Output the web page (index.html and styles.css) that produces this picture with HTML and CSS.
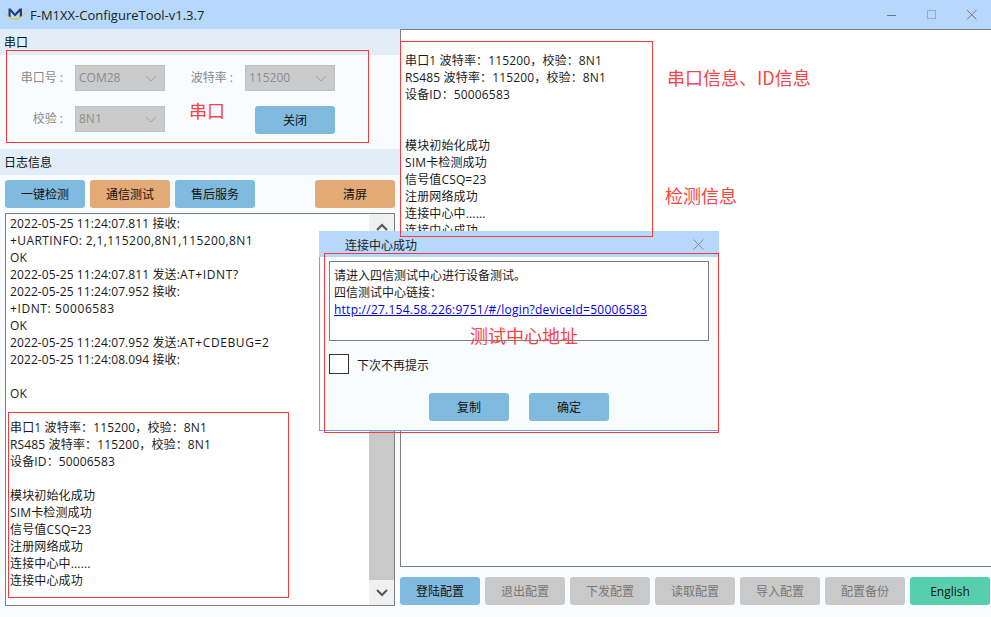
FILE: index.html
```html
<!DOCTYPE html>
<html lang="zh">
<head>
<meta charset="utf-8">
<title>F-M1XX-ConfigureTool-v1.3.7</title>
<link rel="stylesheet" href="styles.css">
</head>
<body>
<div class="window">
  <header class="titlebar">
    <svg class="logo" viewBox="0 0 26 18" width="26" height="18" aria-hidden="true">
      <path d="M6.500 12V3.500H8.500L13 8.500 17.500 3.500H20V12H17.800V6.800L13 11.500 8.600 6.800V12z" fill="#1f3f80"/>
      <path d="M.5 5C5 10.500 9 13.600 13 13.600S21 10.500 25.500 5C22 11 17 15 13 15S4 11 .5 5z" fill="#f0c21c"/>
    </svg>
    <span class="app-title">F-M1XX-ConfigureTool-v1.3.7</span>
    <div class="win-controls">
      <svg width="12" height="12" viewBox="0 0 12 12"><path d="M1 6.500h9" stroke="#777" fill="none"/></svg>
      <svg width="12" height="12" viewBox="0 0 12 12"><rect x="1.500" y="1.500" width="8" height="8" stroke="#a9a9a9" fill="none"/></svg>
      <svg width="12" height="12" viewBox="0 0 12 12"><path d="M1 1l9.500 9.500M10.500 1L1 10.500" stroke="#777" fill="none"/></svg>
    </div>
  </header>
  <main class="content">
    <section class="left">
      <h2 class="section-head serial-head">串口</h2>
      <div class="serial-form">
        <label class="field-label">串口号 :</label>
        <div class="select"><span>COM28</span><svg class="chev" width="12" height="7" viewBox="0 0 12 7"><path d="M1 1l5 5 5-5" stroke="#a0a0a0" fill="none"/></svg></div>
        <label class="field-label">波特率 :</label>
        <div class="select"><span>115200</span><svg class="chev" width="12" height="7" viewBox="0 0 12 7"><path d="M1 1l5 5 5-5" stroke="#a0a0a0" fill="none"/></svg></div>
        <label class="field-label">校验 :</label>
        <div class="select"><span>8N1</span><svg class="chev" width="12" height="7" viewBox="0 0 12 7"><path d="M1 1l5 5 5-5" stroke="#a0a0a0" fill="none"/></svg></div>
        <span></span>
        <button class="btn btn-blue close-btn">关闭</button>
      </div>
      <h2 class="section-head log-head">日志信息</h2>
      <div class="log-tools">
        <button class="btn btn-blue">一键检测</button>
        <button class="btn btn-orange">通信测试</button>
        <button class="btn btn-blue">售后服务</button>
        <button class="btn btn-orange clear-btn">清屏</button>
      </div>
      <div class="log-box">
        <div class="log-text">2022-05-25 11:24:07.811 接收:
<span class="loose">+UARTINFO: 2,1,115200,8N1,115200,8N1</span>
OK
2022-05-25 11:24:07.811 发送:<span class="loose-more">AT+IDNT?</span>
2022-05-25 11:24:07.952 接收:
<span class="loose-more">+IDNT: 50006583</span>
OK
2022-05-25 11:24:07.952 发送:<span class="loose-more">AT+CDEBUG=2</span>
2022-05-25 11:24:08.094 接收:

OK

<span class="summary">串口1 波特率&#xFF1A;115200&#xFF0C;校验&#xFF1A;8N1
RS485 波特率&#xFF1A;115200&#xFF0C;校验&#xFF1A;8N1
设备ID&#xFF1A;50006583

模块初始化成功
SIM卡检测成功
信号值CSQ=23
注册网络成功
连接中心中......
连接中心成功</span></div>
        <div class="scrollbar">
          <div class="sb-btn"><svg width="12" height="8" viewBox="0 0 12 8"><path d="M1 7l5-5 5 5" stroke="#555" stroke-width="2" fill="none"/></svg></div>
          <div class="sb-thumb"></div>
          <div class="sb-btn"><svg width="12" height="8" viewBox="0 0 12 8"><path d="M1 1l5 5 5-5" stroke="#555" stroke-width="2" fill="none"/></svg></div>
        </div>
      </div>
    </section>
    <section class="right">
      <div class="info-box">串口1 波特率&#xFF1A;115200&#xFF0C;校验&#xFF1A;8N1
RS485 波特率&#xFF1A;115200&#xFF0C;校验&#xFF1A;8N1
设备ID&#xFF1A;50006583


模块初始化成功
SIM卡检测成功
信号值CSQ=23
注册网络成功
连接中心中......
连接中心成功</div>
      <div class="config-bar">
        <button class="btn btn-blue">登陆配置</button>
        <button class="btn btn-gray">退出配置</button>
        <button class="btn btn-gray">下发配置</button>
        <button class="btn btn-gray">读取配置</button>
        <button class="btn btn-gray">导入配置</button>
        <button class="btn btn-gray">配置备份</button>
        <button class="btn btn-green">English</button>
      </div>
    </section>
  </main>

  <div class="dialog">
    <div class="dialog-head">
      <span>连接中心成功</span>
      <svg width="11" height="11" viewBox="0 0 11 11"><path d="M.5.500l10 10M10.500.500l-10 10" stroke="#8a8a8a" fill="none"/></svg>
    </div>
    <div class="dialog-body">
      <div class="dialog-msg">请进入四信测试中心进行设备测试。
四信测试中心链接&#xFF1A;
<a href="#">http://27.154.58.226:9751/#/login?deviceId=50006583</a></div>
      <div class="check-row"><span class="checkbox"></span><span class="check-label">下次不再提示</span></div>
      <div class="dialog-actions">
        <button class="btn btn-blue">复制</button>
        <button class="btn btn-blue">确定</button>
      </div>
    </div>
  </div>

  <div class="mark mark-serial"></div>
  <div class="mark mark-log"></div>
  <div class="mark mark-info"></div>
  <div class="mark mark-dialog"></div>
  <span class="note note-serial">串口</span>
  <span class="note note-id">串口信息、ID信息</span>
  <span class="note note-detect">检测信息</span>
  <span class="note note-center">测试中心地址</span>
</div>
</body>
</html>
```
FILE: styles.css
```css
* { box-sizing: border-box; }
html, body { margin: 0; height: 100%; overflow: hidden; }
body {
  font-family: "Open Sans", "Noto Sans CJK SC", sans-serif;
  font-size: 12px;
  color: #1a1a1a;
}
.window {
  position: relative;
  width: 991px;
  height: 617px;
  background: #f8fcff;
  display: flex;
  flex-direction: column;
}
.titlebar {
  height: 29px;
  background: #b5d8fc;
  display: flex;
  align-items: center;
  padding-left: 2px;
  flex: none;
}
.logo { flex: none; margin-top: -2px; }
.app-title { margin-left: 2px; font-size: 13px; color: #222; }
.win-controls {
  margin-left: auto;
  display: flex;
  gap: 28px;
  padding-right: 13px;
}
.content {
  flex: 1;
  display: grid;
  grid-template-columns: 400px 591px;
  min-height: 0;
}
.left { display: flex; flex-direction: column; min-height: 0; }
.section-head {
  margin: 0;
  font-size: 12px;
  font-weight: 400;
  background: #e1edf7;
  padding-left: 4px;
  color: #111;
}
.serial-head { height: 26px; line-height: 27px; }
.log-head { height: 26px; line-height: 27px; }
.serial-form {
  height: 94px;
  display: grid;
  grid-template-columns: 63px 90px 56px 90px;
  grid-auto-rows: 26px;
  row-gap: 15px;
  column-gap: 12px;
  padding: 10px 0 0 0;
  align-content: start;
}
.field-label {
  color: #8a8a8a;
  text-align: right;
  line-height: 26px;
}
.select {
  background: #cbcbcb;
  border: 1px solid #c0c0c0;
  color: #8c8c8c;
  padding-left: 3px;
  line-height: 24px;
  display: flex;
  justify-content: space-between;
  align-items: center;
  padding-right: 7px;
}
.chev { flex: none; }
.btn {
  font: inherit;
  width: 80px;
  height: 28px;
  border: 0;
  border-radius: 3px;
  padding: 0;
  color: #111;
  flex: none;
}
.btn-blue { background: #80bbdf; }
.btn-orange { background: #e3a977; }
.btn-gray { background: #c9c9c9; color: #777; }
.btn-green { background: #57cfac; }
.close-btn { justify-self: end; height: 28px; }
.log-tools {
  height: 38px;
  padding: 5px 5px 0;
  display: flex;
  gap: 5px;
  flex: none;
}
.clear-btn { margin-left: auto; }
.log-box {
  margin: 0 5px 0;
  height: 393px;
  border: 1px solid #7d7d7d;
  background: #fff;
  display: flex;
  overflow: hidden;
}
.log-text {
  flex: 1;
  white-space: pre;
  padding: 1px 0 0 4px;
  line-height: 17px;
  overflow: hidden;
  letter-spacing: .1px;
}
.summary { letter-spacing: .15px; }
.loose { letter-spacing: .4px; }
.loose-more { letter-spacing: .6px; }
.scrollbar {
  width: 25px;
  flex: none;
  background: #f0f0f0;
  display: flex;
  flex-direction: column;
}
.sb-btn {
  height: 25px;
  flex: none;
  display: flex;
  align-items: center;
  justify-content: center;
}
.sb-thumb { flex: 1; background: #c9c9c9; }
.right { display: flex; flex-direction: column; min-height: 0; }
.info-box {
  height: 538px;
  border: 1px solid #7d7d7d;
  border-right: 0;
  background: #fff;
  white-space: pre;
  line-height: 17px;
  padding: 22px 0 0 4px;
  overflow: hidden;
  flex: none;
  letter-spacing: .15px;
}
.config-bar {
  display: flex;
  gap: 5px;
  padding-top: 10px;
}
.dialog {
  position: absolute;
  left: 319px;
  top: 231px;
  width: 400px;
  height: 200px;
  border: 1px solid #7e9fd8;
  border-top: 0;
  background: #f8fcff;
  display: flex;
  flex-direction: column;
}
.dialog-head {
  height: 26px;
  flex: none;
  background: #b5d8fc;
  margin: 0 -1px;
  display: flex;
  align-items: center;
  justify-content: space-between;
  padding: 1px 15px 0 26px;
  color: #222;
}
.dialog-body { padding: 4px 9px 0; display: flex; flex-direction: column; }
.dialog-msg {
  height: 80px;
  border: 1px solid #7d7d7d;
  background: #fff;
  white-space: pre;
  line-height: 17px;
  padding: 5px 0 0 4px;
}
.dialog-msg a { color: #0000e6; letter-spacing: .24px; }
.check-row {
  display: flex;
  align-items: center;
  gap: 8px;
  margin-top: 13px;
  height: 20px;
}
.check-label { padding-top: 2px; }
.checkbox {
  width: 20px;
  height: 20px;
  border: 1px solid #333;
  background: #fff;
}
.dialog-actions {
  display: flex;
  justify-content: center;
  gap: 20px;
  margin-top: 19px;
}
.mark {
  position: absolute;
  border: 1px solid #f53b3b;
  pointer-events: none;
}
.mark-serial { left: 6px; top: 50px; width: 363px; height: 93px; }
.mark-log { left: 8px; top: 412px; width: 281px; height: 186px; }
.mark-info { left: 400px; top: 41px; width: 253px; height: 196px; }
.mark-dialog { left: 324px; top: 253px; width: 395px; height: 180px; }
.note {
  position: absolute;
  color: #f54545;
  font-size: 18px;
  line-height: 24px;
  font-family: "Noto Sans CJK SC", sans-serif;
  white-space: nowrap;
}
.note-serial { left: 189px; top: 98px; }
.note-id { left: 667px; top: 65px; }
.note-detect { left: 665px; top: 183px; }
.note-center { left: 470px; top: 323px; }
```
